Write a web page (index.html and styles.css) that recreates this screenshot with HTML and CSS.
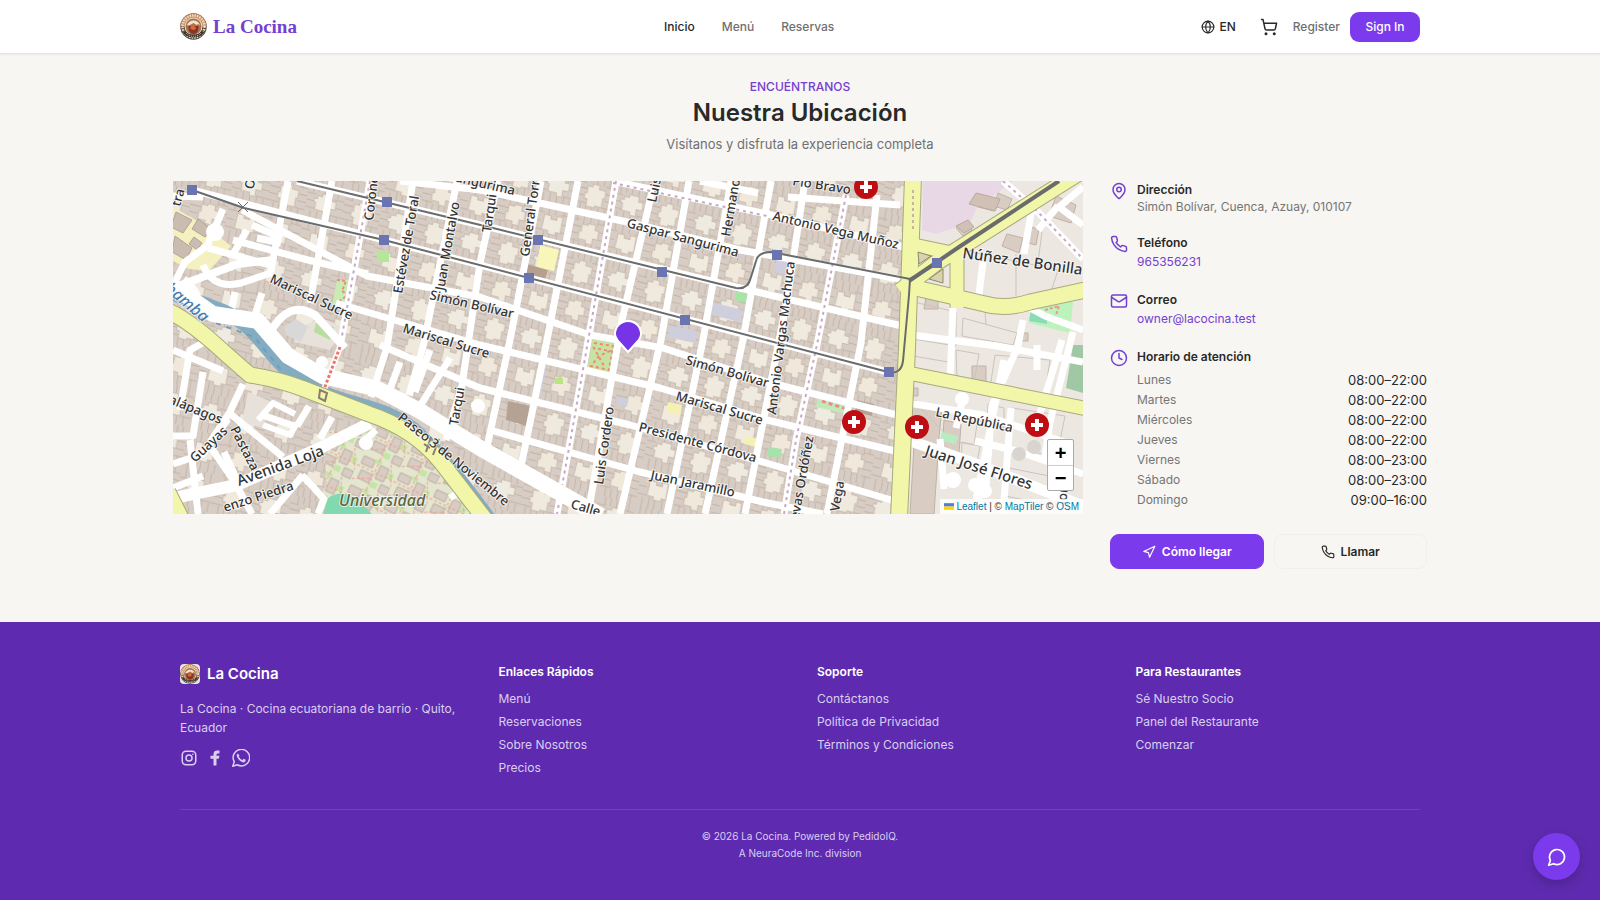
FILE: index.html
```html
<!DOCTYPE html>
<html lang="es">
<head>
<meta charset="utf-8">
<meta name="viewport" content="width=device-width, initial-scale=1">
<title>La Cocina</title>
<link rel="stylesheet" href="styles.css">
</head>
<body>
<svg class="defs" width="0" height="0" aria-hidden="true">
  <symbol id="emblem" viewBox="0 0 54 54">
    <circle cx="27" cy="27" r="26.500" fill="#55483d"/>
    <path d="M1 27a26 26 0 0 1 52 0z" fill="#c98c62"/>
    <circle cx="27" cy="27" r="22" fill="none" stroke="#f0ddc2" stroke-width="5" stroke-dasharray="3 2"/>
    <circle cx="27" cy="27" r="18" fill="#f2dfc5"/>
    <circle cx="27" cy="27" r="16" fill="#a9744f"/>
    <path d="M14 25c3-12 22-14 26 0l-4-3-3 2-6-4-7 4z" fill="#f3e5cf"/>
    <path d="M17 26h20c1 10-4 16-10 16s-11-6-10-16z" fill="#8d3324"/>
    <path d="M20 29c3-4 10-4 12 1-2 5-8 6-12-1z" fill="#d76b3c"/>
    <path d="M8 37c8 12 30 12 38 0" fill="none" stroke="#39382f" stroke-width="6"/>
    <path d="M12 40c8 9 22 9 30 0" fill="none" stroke="#cfc2a9" stroke-width="2" stroke-dasharray="2 2"/>
  </symbol>
  <symbol id="phone" viewBox="0 0 24 24"><path d="M22 16.920v3a2 2 0 0 1-2.180 2 19.790 19.790 0 0 1-8.630-3.070 19.500 19.500 0 0 1-6-6 19.790 19.790 0 0 1-3.070-8.670A2 2 0 0 1 4.110 2h3a2 2 0 0 1 2 1.720 12.840 12.840 0 0 0 .7 2.810 2 2 0 0 1-.45 2.110L8.090 9.910a16 16 0 0 0 6 6l1.270-1.270a2 2 0 0 1 2.110-.45 12.840 12.840 0 0 0 2.810.7A2 2 0 0 1 22 16.920z"/></symbol>
</svg>

<header class="header">
  <div class="header-inner">
    <a class="brand" href="#"><svg class="brand-logo"><use href="#emblem"/></svg>La Cocina</a>
    <nav class="nav" aria-label="Principal">
      <a class="active" href="#">Inicio</a><a href="#">Menú</a><a href="#">Reservas</a>
    </nav>
    <div class="actions">
      <button class="lang" type="button"><svg class="icon i14" viewBox="0 0 24 24"><circle cx="12" cy="12" r="10"/><path d="M12 2a14.500 14.500 0 0 0 0 20 14.500 14.500 0 0 0 0-20M2 12h20"/></svg>EN</button>
      <button class="cart" type="button" aria-label="Carrito"><svg class="icon i18" viewBox="0 0 24 24"><circle cx="8" cy="21" r="1"/><circle cx="19" cy="21" r="1"/><path d="M2.050 2.050h2l2.660 12.420a2 2 0 0 0 2 1.580h9.780a2 2 0 0 0 1.950-1.570l1.650-7.430H5.120"/></svg></button>
      <a class="register" href="#">Register</a>
      <button class="signin" type="button">Sign In</button>
    </div>
  </div>
</header>

<main class="location">
  <div class="intro">
    <p class="eyebrow">ENCUÉNTRANOS</p>
    <h1>Nuestra Ubicación</h1>
    <p class="lead">Visítanos y disfruta la experiencia completa</p>
  </div>
  <div class="columns">
    <div class="map">
      <svg class="map-art" viewBox="173 181 910 333" preserveAspectRatio="xMidYMid slice" role="img" aria-label="Mapa de Cuenca">
        <defs>
          <pattern id="blocks" width="78" height="76" patternUnits="userSpaceOnUse" patternTransform="matrix(.94 .246 -.18 1 580 172)">
            <rect width="78" height="76" fill="#d8cdc4"/>
            <path d="M0 8h9M0 14h11M0 21h9M0 28h12M6 38v-9M12 38v-8M18 38V27M25 38V28M32 38v-9M39 8H29M39 15H27M39 22H30M39 29H28M8 0v9M14 0v7M20 0v10M27 0v8M33 0v9M45 0v10M51 0v8M57 0v11M64 0v9M71 0v10M45 38V28M52 38V27M59 38v-8M66 38V27M73 38v-9M39 11h9M39 18h12M39 25h10M78 12H67M78 20H69M78 28H66M6 38v9M13 38v11M20 38v8M28 38v10M34 38v8M46 38v8M54 38v12M61 38v9M70 38v8M6 76V65M12 76V67M19 76V64M25 76V67M33 76v-9M45 76v-9M52 76V65M58 76V67M66 76V64M73 76V67M0 45h9M0 52h12M0 59h9M0 66h11M39 45H28M39 53H30M39 61H27M39 68H29M39 47h10M39 56h8M39 64h11M78 46H67M78 55H69M78 63H67" stroke="#c3b4a8" stroke-width="1"/>
            <g stroke="#c9bcb0" stroke-width="1">
              <path d="M11 11h5v-3h7v4h7v8h-2v9h-7v2h-9v-7h-3v-6h2z" fill="#efe9de"/>
              <path d="M50 12h5v-3h10v5h5v8h-6v7h-6v-3h-9v-7h-2v-4h3z" fill="#f0ebe1"/>
              <path d="M12 49h6v-2h8v5h4v9h-5v6h-7v-3h-8v-8h2z" fill="#efe8db"/>
              <path d="M50 49h7v3h6v-4h6v16h-5v3h-8v-3h-7z" fill="#f0eadf"/>
            </g>
          </pattern>
          <pattern id="campus" width="40" height="32" patternUnits="userSpaceOnUse" patternTransform="rotate(25)">
            <rect width="40" height="32" fill="#e4e6cf"/>
            <path d="M3 3h12v8H3zM22 5h9v14h-9zM6 17h12v9H6zM30 22h10v8H30z" fill="#d9cdc3" stroke="#bbaea3"/>
            <path d="M15 1h7v4h-7zM32 8h6v6h-6zM20 23h7v6h-7z" fill="#c4e6a5"/>
            <path d="M0 14h40M19 0v32M1 29l17-8M31 0l9 20" fill="none" stroke="#f09a92" stroke-width="1" stroke-dasharray="3 2"/>
          </pattern>
          <g id="hospital"><circle r="12" fill="#bf0d14"/><path d="M-6 0H6M0-6V6" stroke="#fff" stroke-width="4"/></g>
          <rect id="stop" x="-5" y="-5" width="10" height="10" fill="#6974b1"/>
        </defs>
        <rect x="173" y="181" width="910" height="333" fill="url(#blocks)"/>

        <!-- eastern blocks -->
        <path d="M915 181h168v333H898z" fill="#ece8e1"/>
        <g fill="#d9cdc3" stroke="#c0b1a6">
          <path d="M976 195l22 6-4 10-24-6zM998 193l14 6-5 11-13-4zM956 228l10-5 6 7-9 6zM1007 234l16 4-4 15-17-7zM1056 196l20 9-5 18-22-7zM1026 226l13 3-3 16-12-3zM926 297h12v12h-14zM972 366h14v16h-14zM912 400l30 8-4 38-30-10zM944 420l17 4-2 30-17-4zM914 446l24 8-4 60h-24zM910 388h8v8h-8zM1021 333h7v8h-7z"/>
        </g>
        <g fill="none" stroke="#c9c4bc">
          <path d="M915 240l28 18M962 250l96 20-8 25-42 10-46-8zM914 302l42 10v34l-43-7zM963 318l54 15-4 12-51-9zM913 356l35 6v17l-35-5zM956 350l23 4-5 28-17-3zM995 355l55 5-6 40-54-12zM918 405l60 12-4 28-22-4zM988 404l16 4v20l-17-4zM1012 408l53 8-8 40-49-8zM962 442l18 4-4 22-15-3zM1009 468l50 10-4 28-50-10z"/>
          <path d="M1016 254v42M985 312l1 12M1051 374l-4 18M1042 232l-4 30"/>
        </g>
        <path d="M923 181h90l-37 28-6 14-34 11-14-4z" fill="#e8d8e6"/>
        <path d="M976 193l24 6-5 12-26-7zM956 226l12-6 6 7-10 6z" fill="#d0c0b6" stroke="#b9aa9f"/>
        <path d="M1031 308l20-3 18-5 4 2-3 31-41-10z" fill="#bcf3bc"/>
        <path d="M1031 309l16 4v11l-18-3z" fill="#8bdcb4"/>
        <path d="M1045 310l14-4-4 12 5 4" fill="none" stroke="#ec978f" stroke-width="2" stroke-dasharray="3 2"/>
        <path d="M1073 345h10v48l-17-5z" fill="#a0c8a4"/>
        <path d="M942 432l16 4-2 8-16-3z" fill="#b9ebc0"/>

        <!-- western blocks and riverside -->
        <path d="M173 207l30 17 28 22-22 25-20-2-16-8z" fill="#f4f0bf"/>
        <path d="M176 212l16 8-9 13-12-6zM198 219l13 10-6 8-13-8zM175 236l17 12-6 12-14-8zM194 237l8 6-5 7-8-6z" fill="#cabcb0" stroke="#b3a398"/>
        <path d="M325 432l42-10 90 42 35 50H314l12-30z" fill="url(#campus)"/>
        <path d="M326 500q12-12 30-2l16 16h-48z" fill="#82d9af"/>
        <path d="M248 392l24 10-10 26-20-6zM300 327l22-9 22 10-14 22-36-8z" fill="#e7e1da"/>
        <path d="M284 327l12-8 12 8-7 15-15-7z" fill="#d8d8d8"/>
        <path d="M316 323l18 4-4 13-16-8z" fill="#b7dda1"/>
        <path d="M337 280h12l-3 28-14-2z" fill="#c9ecb3"/>
        <path d="M337 280l9 1-4 10 6 4-10 7" fill="none" stroke="#ed8980" stroke-width="2" stroke-dasharray="3 2"/>

        <!-- parks and plazas -->
        <path d="M376 251h13v11h-11z" fill="#b4e79a"/>
        <path d="M540 245l19 5-5 21-17-4z" fill="#f8f6b9"/>
        <path d="M526 264l22 6-3 9-23-5z" fill="#b5a090"/>
        <path d="M592 339l25 4-6 33-24-6z" fill="#c6e3a4"/>
        <path d="M594 343l19 3-4 24-18-4 8-10 11-5-16-3 10 18" fill="none" stroke="#ef8a72" stroke-width="2" stroke-dasharray="3 3"/>
        <path d="M668 402l14 3-2 10-14-3zM746 436l12 3-2 8-12-3z" fill="#f5f1b4"/>
        <path d="M769 447l13 2-2 9-13-2z" fill="#a5e2ac"/>
        <path d="M736 292l11 2-1 9-11-3z" fill="#a5e6a5"/>
        <path d="M715 303l28 7-3 12-32-8zM671 326l27 5-3 12-28-6zM776 259l17 5-3 12-15-4zM541 368l5 2-6 28-6-2zM618 396l10 3-1 8-11-3z" fill="#cfcedd"/>
        <path d="M818 397l34 8-2 10-34-8z" fill="#c1eabb"/>
        <path d="M822 401l24 8" stroke="#ef8b84" stroke-width="3" stroke-dasharray="4 3"/>
        <path d="M508 401l22 5-3 20-21-6zM857 400l17 4-2 12-17-4z" fill="#b5a293"/>
        <path d="M555 378h8v6h-8z" fill="#b7e57f"/>

        <!-- ordinary streets -->
        <g class="streets" stroke-width="7">
          <path d="M498 181L480 263 462 385 446 440M541 181l-31 159-23 107M578 181l-31 159-28 136M652 192l-30 128-34 194M689 181l-28 159-41 174M731 181l-28 159-36 174M771 181l-28 159-38 174M805 181l-18 119-42 214M877 195l-16 148-34 171M413 181l-26 166-16 50M457 181l-34 166-14 48M288 181l-18 95M332 181l-22 122"/>
          <path d="M297 181l196 47 247 60 162 38M400 181l80 9 147 32 113 28 165 30M613 181l154 33 137 33M700 181l58 12M788 197l112 8M192 190l192 50 504 132M173 196l30 1M223 209l-16 37-22 16-14 28M242 210l125 66 113 21 110 38 73 13 104 34 134 34M233 240l75 20 60 14M336 303l144 42 180 43 107 32 132 32M173 350l50 21M380 345l100 43 150 37 133 37 135 40M490 430l150 42 123 30 60 12M450 358l-30 48M400 362l-14 38M430 350l-15 42"/>
          <path d="M184 279q12 9 20 30M203 265q10 25 38 18l30-10M208 248l62 17M247 230l-15 26M235 292l-5 26M262 293l-8 25M257 238l24 5M252 225l30 13M180 410l10-60 18-10M173 436l20 0 10-64M243 384l-15 32M228 412l55 45M230 412l-20 30M173 464l30-10 25-35M190 440l8 74M212 449l22 32 18 33M173 488l30-12M238 482l-14-30M302 475l22 24-6 15M303 475l-33 39M309 406l-12 20M332 417l-12 22M262 415l35 12M376 430l-15 14M450 498l20-14"/>
          <path d="M1003 181l34 30 46 48M1032 208l-8 46M1083 225l-24-18 24-20M1058 206l-20 24M983 262l-5 40M953 305l-3 78M1015 300l30 16 38 14M1023 320l-5 26-26 60-6 80M912 335l85 11 86 16M1073 332l-23 90-6 40M1062 340l-24 80M1004 360l-30 150M1037 345v25M962 402l-6 26M908 403l75 12 90 30M940 439l4 50M975 441l42 10 66 23M1011 408l-8 106M985 484l-12 25"/>
        </g>
        <g fill="#fff"><circle cx="215" cy="232" r="9"/><circle cx="322" cy="362" r="6"/><circle cx="478" cy="406" r="7"/><circle cx="366" cy="443" r="7"/><circle cx="962" cy="399" r="7"/><circle cx="953" cy="480" r="8"/><circle cx="975" cy="485" r="7"/><circle cx="985" cy="491" r="7"/></g>
        <g fill="#d8d5d0"><circle cx="1019" cy="454" r="7"/><circle cx="1034" cy="447" r="7"/></g>
        <g fill="none" stroke="#c6a8c6" stroke-width="2" stroke-dasharray="3 4">
          <path stroke="#fff" stroke-width="7" stroke-dasharray="none" d="M370 181l-30 166M616 181l-29 166-16 90-14 77M846 195l-28 145-22 100-12 74"/>
          <path d="M370 181l-30 166M616 181l-29 166-16 90-14 77M846 195l-28 145-22 100-12 74M613 183l154 33M1003 181l34 30 46 48"/>
        </g>

        <!-- river -->
        <path d="M164 289c30 15 62 18 84 38s35 48 70 64 72 16 100 43 43 48 70 84" fill="none" stroke="#83acc1" stroke-width="15"/>
        <path d="M216 323l38 14 33 40" fill="none" stroke="#6f9ec4" stroke-width="2" stroke-dasharray="5 6"/>

        <!-- wide streets -->
        <g class="streets" stroke-width="16">
          <path d="M173 286l40 28 45 7 30 35 35 20 55 13 42 22 60 37 121 68"/>
          <path d="M173 498l64-13 83-37 50-25" stroke-width="12"/>
          <path d="M178 286l60-22 35-4M270 333q18-34 45-18l30 33" stroke-width="8"/>
          <path d="M258 420l15-17 22 11M263 425l27 10 7-12" stroke-width="6"/>
          <path d="M908 440l68 24 107 42" stroke-width="11"/>
        </g>
        <path d="M340 347l-17 45" stroke="#fff" stroke-width="6"/>
        <path d="M340 347l-17 45" stroke="#ec766d" stroke-width="3" stroke-dasharray="3 2"/>

        <!-- avenues -->
        <g fill="none" stroke-linejoin="round">
          <g stroke="#a7a97d">
            <path d="M168 311q20 9 48 34 20 18 34 30 28 4 54 14l65 25q45 15 72 48l50 65M168 492l15 30" stroke-width="17"/>
            <path d="M913 178l-6 170-8 170" stroke-width="18"/>
            <path d="M900 291l36-28 143-90M907 286l78 18q20 6 45-2l60-13" stroke-width="17"/>
            <path d="M914 245l43 9v54M908 373l180 36" stroke-width="15"/>
          </g>
          <g stroke="#f2f6a9">
            <path d="M168 311q20 9 48 34 20 18 34 30 28 4 54 14l65 25q45 15 72 48l50 65M168 492l15 30" stroke-width="15"/>
            <path d="M913 178l-6 170-8 170" stroke-width="16"/>
            <path d="M900 291l36-28 143-90M907 286l78 18q20 6 45-2l60-13" stroke-width="15"/>
            <path d="M914 245l43 9v54M908 373l180 36" stroke-width="13"/>
          </g>
        </g>
        <path d="M913 190v42" stroke="#c9b3a0" stroke-width="2" stroke-dasharray="3 3"/>
        <path d="M918 252l13 4-12 8zM929 279l14-10v14z" fill="#d9d2ac" stroke="#8e8a70"/>

        <!-- tramway -->
        <g fill="none" stroke="#696b6c" stroke-width="2">
          <path d="M297 181l196 47 243 60q12 2 15-11l5-16q2-9 15-9l139 27 29-16"/>
          <path d="M192 190l52 18 140 32 504 132q13 3 15-11l6-66 1-16"/>
          <path d="M909 281l50-34 100-66" stroke-width="4"/>
          <path d="M238 202l10 10m0-10l-10 10" stroke-width="1"/>
        </g>
        <use href="#stop" x="192" y="190"/><use href="#stop" x="387" y="202"/><use href="#stop" x="384" y="240"/><use href="#stop" x="538" y="240"/><use href="#stop" x="529" y="278"/><use href="#stop" x="662" y="272"/><use href="#stop" x="685" y="320"/><use href="#stop" x="777" y="255"/><use href="#stop" x="937" y="263"/><use href="#stop" x="889" y="372"/>
        <path d="M320 390l7 3-2 8-6-3zM424 444l6 4m-4 4l5-15m2 18l6-16" fill="none" stroke="#8d7a74" stroke-width="2"/>

        <g class="labels">
          <text transform="translate(269 282) rotate(25)">Mariscal Sucre</text>
          <text transform="translate(402 332) rotate(17)">Mariscal Sucre</text>
          <text transform="translate(429 299) rotate(13)">Simón Bolívar</text>
          <text transform="translate(626 227) rotate(15)">Gaspar Sangurima</text>
          <text transform="translate(448 180) rotate(13)">Sangurima</text>
          <text transform="translate(772 220) rotate(13)">Antonio Vega Muñoz</text>
          <text transform="translate(792 185) rotate(9)">Pío Bravo</text>
          <text transform="translate(685 364) rotate(16)">Simón Bolívar</text>
          <text transform="translate(675 400) rotate(16)">Mariscal Sucre</text>
          <text transform="translate(638 431) rotate(15)">Presidente Córdova</text>
          <text transform="translate(650 479) rotate(12)">Juan Jaramillo</text>
          <text transform="translate(570 508) rotate(16)">Calle</text>
          <text transform="translate(935 416) rotate(12)">La República</text>
          <text class="big" transform="translate(924 455) rotate(18)">Juan José Flores</text>
          <text class="big" transform="translate(962 258) rotate(8)">Núñez de Bonilla</text>
          <text transform="translate(373 221) rotate(-83)">Coronel</text>
          <text transform="translate(402 294) rotate(-80)">Estévez de Toral</text>
          <text transform="translate(444 291) rotate(-80)">Juan Montalvo</text>
          <text transform="translate(491 233) rotate(-82)">Tarqui</text>
          <text transform="translate(529 257) rotate(-82)">General Torres</text>
          <text transform="translate(656 203) rotate(-78)">Luis</text>
          <text transform="translate(730 237) rotate(-80)">Hermano</text>
          <text transform="translate(776 415) rotate(-83)">Antonio Vargas Machuca</text>
          <text transform="translate(603 485) rotate(-82)">Luis Cordero</text>
          <text transform="translate(458 426) rotate(-80)">Tarqui</text>
          <text transform="translate(796 536) rotate(-80)">Cuevas Ordóñez</text>
          <text transform="translate(839 512) rotate(-80)">Vega</text>
          <text transform="translate(1066 505) rotate(-84)">Jorge Díaz</text>
          <text transform="translate(180 207) rotate(-75)">tra</text>
          <text transform="translate(253 190) rotate(-75)">O</text>
          <text transform="translate(168 403) rotate(22)">alápagos</text>
          <text transform="translate(195 463) rotate(-43)">Guayas</text>
          <text transform="translate(230 429) rotate(63)">Pastaza</text>
          <text class="big" transform="translate(239 486) rotate(-20)">Avenida Loja</text>
          <text transform="translate(225 512) rotate(-18)">enzo Piedra</text>
          <text transform="translate(397 419) rotate(39)">Paseo 3 de Noviembre</text>
          <text class="water" transform="translate(164 290) rotate(40)">bamba</text>
          <text class="campus" x="339" y="506">Universidad</text>
        </g>
        <use href="#hospital" x="866" y="187"/><use href="#hospital" x="854" y="422"/><use href="#hospital" x="917" y="427"/><use href="#hospital" x="1037" y="425"/>
        <path d="M628 352l-9-10q-4-5-4-8a13 13 0 0 1 26 0q0 4-4 8z" fill="#7734e6" stroke="#fff" stroke-width="2"/>
      </svg>
      <div class="zoom"><button type="button" aria-label="Acercar">+</button><button type="button" aria-label="Alejar">−</button></div>
      <div class="credit"><a href="#"><svg class="flag" viewBox="0 0 12 8"><path fill="#4c7be1" d="M0 0h12v4H0z"/><path fill="#ffd500" d="M0 4h12v4H0z"/></svg> Leaflet</a> | © <a href="#">MapTiler</a> © <a href="#">OSM</a></div>
    </div>

    <aside class="info">
      <section class="item">
        <svg class="icon i18" viewBox="0 0 24 24"><path d="M20 10c0 5-5.540 10.190-7.400 11.800a1 1 0 0 1-1.200 0C9.540 20.190 4 15 4 10a8 8 0 0 1 16 0"/><circle cx="12" cy="10" r="3"/></svg>
        <div><h2>Dirección</h2><p class="address">Simón Bolívar, Cuenca, Azuay, 010107</p></div>
      </section>
      <section class="item">
        <svg class="icon i18"><use href="#phone"/></svg>
        <div><h2>Teléfono</h2><a class="contact" href="#">965356231</a></div>
      </section>
      <section class="item">
        <svg class="icon i18" viewBox="0 0 24 24"><rect x="2" y="4" width="20" height="16" rx="2"/><path d="m22 7-8.970 5.700a2 2 0 0 1-2.060 0L2 7"/></svg>
        <div><h2>Correo</h2><a class="contact" href="#">owner@lacocina.test</a></div>
      </section>
      <section class="item">
        <svg class="icon i18" viewBox="0 0 24 24"><circle cx="12" cy="12" r="10"/><path d="M12 6v6l4 2"/></svg>
        <div><h2>Horario de atención</h2>
          <table>
            <tr><th scope="row">Lunes</th><td>08:00–22:00</td></tr>
            <tr><th scope="row">Martes</th><td>08:00–22:00</td></tr>
            <tr><th scope="row">Miércoles</th><td>08:00–22:00</td></tr>
            <tr><th scope="row">Jueves</th><td>08:00–22:00</td></tr>
            <tr><th scope="row">Viernes</th><td>08:00–23:00</td></tr>
            <tr><th scope="row">Sábado</th><td>08:00–23:00</td></tr>
            <tr><th scope="row">Domingo</th><td>09:00–16:00</td></tr>
          </table>
        </div>
      </section>
      <div class="cta">
        <a class="btn primary" href="#"><svg class="icon i14" viewBox="0 0 24 24"><path d="M3 11 22 2l-9 19-2-8z"/></svg>Cómo llegar</a>
        <a class="btn" href="#"><svg class="icon i14"><use href="#phone"/></svg>Llamar</a>
      </div>
    </aside>
  </div>
</main>

<footer class="footer">
  <div class="footer-inner">
    <div class="footer-grid">
      <div>
        <a class="footer-brand" href="#"><svg class="footer-logo"><use href="#emblem"/></svg>La Cocina</a>
        <p class="about">La Cocina · Cocina ecuatoriana de barrio · Quito, Ecuador</p>
        <div class="social">
          <a href="#" aria-label="Instagram"><svg class="icon i18" viewBox="0 0 24 24"><rect x="3" y="3" width="18" height="18" rx="5"/><circle cx="12" cy="12" r="4"/><path d="M17 7h.01"/></svg></a>
          <a href="#" aria-label="Facebook"><svg class="i18" viewBox="0 0 24 24"><path fill="currentColor" d="M10 22v-9H6V9h4V7c0-4 2-5 5-5h3v4h-2c-2 0-2 1-2 3h4l-1 4h-3v9z"/></svg></a>
          <a href="#" aria-label="WhatsApp"><svg class="icon i18" viewBox="0 0 24 24"><path d="M1 23l2-6a11 11 0 1 1 4 4z"/><path fill="currentColor" stroke="none" d="M8 6c-2 0-2 3-1 5 2 4 5 6 8 7 2 0 4-2 3-4l-3-1-1 2c-2-1-4-3-5-5l1-1z"/></svg></a>
        </div>
      </div>
      <nav aria-label="Enlaces Rápidos"><h2>Enlaces Rápidos</h2><a href="#">Menú</a><a href="#">Reservaciones</a><a href="#">Sobre Nosotros</a><a href="#">Precios</a></nav>
      <nav aria-label="Soporte"><h2>Soporte</h2><a href="#">Contáctanos</a><a href="#">Política de Privacidad</a><a href="#">Términos y Condiciones</a></nav>
      <nav aria-label="Para Restaurantes"><h2>Para Restaurantes</h2><a href="#">Sé Nuestro Socio</a><a href="#">Panel del Restaurante</a><a href="#">Comenzar</a></nav>
    </div>
    <div class="legal"><p>© 2026 La Cocina. Powered by PedidoIQ.</p><p>A NeuraCode Inc. division</p></div>
  </div>
</footer>
<button class="chat" type="button" aria-label="Chat"><svg class="icon" viewBox="0 0 24 24"><path d="M7.900 20A9 9 0 1 0 4 16.100L2 22z"/></svg></button>
</body>
</html>
```
FILE: styles.css
```css
* { box-sizing: border-box; }
body {
  margin: 0;
  min-height: 100vh;
  display: flex;
  flex-direction: column;
  background: #f7f6f3;
  color: #292929;
  font: 12px/16px Inter, "Open Sans", sans-serif;
}
h1, h2, p { margin: 0; }
a { color: inherit; text-decoration: none; }
button { font: inherit; color: inherit; border: 0; padding: 0; background: none; cursor: pointer; }
svg { display: block; flex: none; }
.defs { position: absolute; }
.icon { fill: none; stroke: currentColor; stroke-width: 2; stroke-linecap: round; stroke-linejoin: round; }
.i14 { width: 14px; height: 14px; }
.i18 { width: 18px; height: 18px; }

.header { background: #fff; border-bottom: 1px solid #e5e4e2; box-shadow: 0 1px 2px #0000000d; }
.header-inner {
  max-width: 1240px;
  height: 53px;
  margin: 0 auto;
  display: flex;
  align-items: center;
  justify-content: space-between;
}
.brand { display: flex; align-items: center; gap: 6px; color: #7440d0; font: bold 19px/24px "Liberation Serif", serif; }
.brand-logo { width: 27px; height: 27px; }
.nav { display: flex; gap: 27px; color: #707070; font-weight: 500; }
.nav .active { color: #292929; }
.actions { display: flex; align-items: center; justify-content: flex-end; font-weight: 500; }
.lang { display: flex; align-items: center; gap: 4px; margin-right: 24px; }
.cart { margin-right: 15px; }
.register { color: #707070; margin-right: 10px; }
.signin { width: 70px; height: 30px; border-radius: 9px; background: #7c3aed; color: #fff; }

.location { width: 100%; max-width: 1254px; margin: 0 auto; padding: 24px 0 53px; }
.intro { text-align: center; margin-bottom: 24px; }
.eyebrow { color: #7440d0; font-weight: 500; line-height: 17px; }
h1 { font-size: 24px; line-height: 36px; font-weight: 600; }
.lead { color: #707070; font-size: 13px; line-height: 26px; }
.columns { display: grid; grid-template-columns: minmax(0, 1fr) 317px; gap: 27px; }
.map { position: relative; height: 333px; overflow: hidden; }
.map-art { width: 100%; height: 100%; }
.streets { fill: none; stroke: #fff; stroke-linejoin: round; }
.labels { font-family: "Noto Sans", sans-serif; font-size: 13px; font-weight: 500; fill: #333; stroke: #ffffffb3; stroke-width: 2px; paint-order: stroke; }
.labels .big { font-size: 15px; }
.labels .water { font-size: 16px; font-style: italic; fill: #457eb3; }
.labels .campus { font-size: 16px; font-style: italic; fill: #5c663f; }
.zoom { position: absolute; right: 9px; bottom: 23px; width: 27px; border: 1px solid #aaa; border-radius: 2px; background: #fff; }
.zoom button { display: block; width: 100%; height: 25px; font: bold 20px/24px "Liberation Sans", sans-serif; color: #000; }
.zoom button + button { border-top: 1px solid #ccc; }
.credit { position: absolute; right: 0; bottom: 0; padding: 0 4px; background: #ffffffcc; font: 10px/15px "Liberation Sans", sans-serif; color: #333; }
.credit a { color: #0078a8; }
.flag { display: inline-block; width: 10px; height: 7px; }

.info { display: flex; flex-direction: column; }
.item { display: flex; gap: 9px; margin-bottom: 20px; }
.item:first-child { margin-bottom: 19px; }
.item > .icon { margin-top: 1px; color: #7440d0; }
.item > div { flex: 1; }
.info h2 { font-size: 12px; line-height: 18px; font-weight: 600; }
.address { color: #757575; }
.contact { display: block; padding: 2px 0 1px; color: #7440d0; }
table { width: 100%; margin-top: 4px; border-collapse: collapse; }
th, td { height: 20px; padding: 0; font-weight: 400; }
th { text-align: left; color: #757575; }
td { text-align: right; font-size: 13px; }
.cta { display: grid; grid-template-columns: 1fr 1fr; gap: 10px; margin-top: 4px; }
.btn { height: 35px; display: flex; align-items: center; justify-content: center; gap: 6px; border: 1px solid #f0efec; border-radius: 9px; font-weight: 600; }
.primary { border-color: #7c3aed; background: #7c3aed; color: #fff; }

.footer { flex: 1; background: #5e2bb0; color: #dbcef0; padding: 41px 0 40px; }
.footer-inner { max-width: 1240px; margin: 0 auto; }
.footer-grid { display: grid; grid-template-columns: repeat(4, 1fr); gap: 34px; padding-bottom: 33px; border-bottom: 1px solid #7042ba; }
.footer-brand { display: flex; align-items: center; gap: 7px; color: #fff; font-size: 15px; line-height: 20px; font-weight: 600; padding-top: 1px; }
.footer-logo { width: 20px; height: 20px; border-radius: 4px; background: #eee4e2; }
.about { margin: 15px 0 12px; line-height: 19px; }
.social { display: flex; gap: 8px; }
.footer nav { display: flex; flex-direction: column; gap: 7px; }
.footer h2 { color: #fff; font-size: 12px; line-height: 18px; font-weight: 600; margin-bottom: 3px; }
.legal { padding-top: 18px; text-align: center; font-size: 10px; line-height: 17px; }
.chat { position: fixed; right: 20px; bottom: 20px; width: 47px; height: 47px; border-radius: 50%; background: #7c3aed; color: #fff; display: grid; place-items: center; box-shadow: 0 4px 12px #0003; }
.chat .icon { width: 20px; height: 20px; }
```
